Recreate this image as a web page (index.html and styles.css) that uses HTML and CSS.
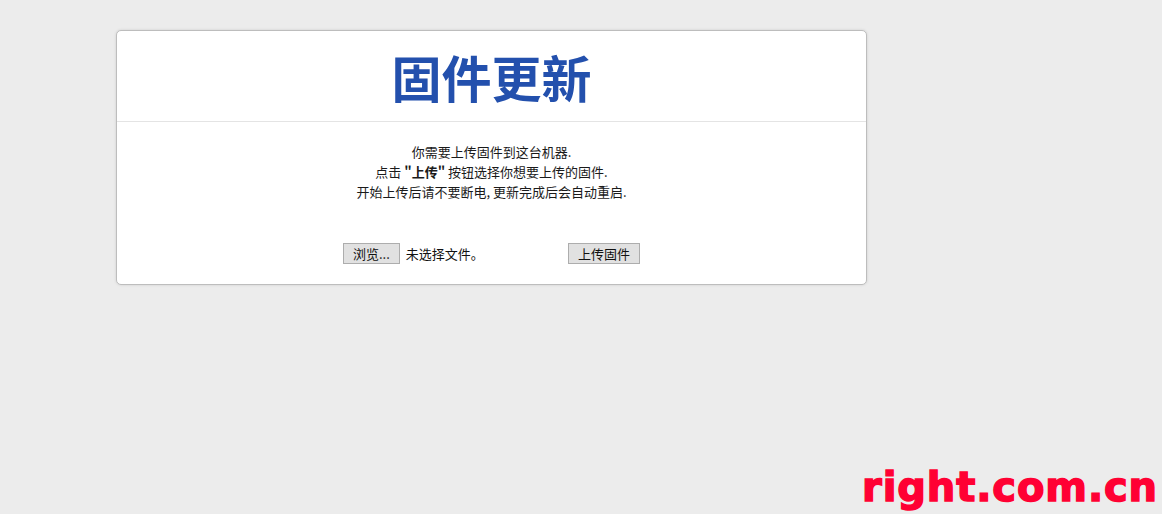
FILE: index.html
```html
<!DOCTYPE html>
<html lang="zh-CN">
<head>
    <meta charset="UTF-8">
    <title>固件更新</title>
    <link rel="stylesheet" href="styles.css">
</head>
<body>
    <div class="panel">
        <div class="panel-head">
            <h1>固件更新</h1>
        </div>
        <div class="panel-body">
            <p class="notes">
                你需要上传固件到这台机器.<br>
                点击 <b>"上传"</b> 按钮选择你想要上传的固件.<br>
                开始上传后请不要断电, 更新完成后会自动重启.
            </p>
            <form class="upload-row">
                <span class="file-box">
                    <span class="btn">浏览...</span>
                    <span class="file-name">未选择文件。</span>
                </span>
                <span class="btn">上传固件</span>
            </form>
        </div>
    </div>
    <div class="watermark">right.com.cn</div>
</body>
</html>
```

FILE: styles.css
```css
body {
    margin: 0;
    background-color: #ececec;
    font-family: "Noto Sans CJK SC", "Liberation Sans", sans-serif;
    color: #222;
    height: 514px;
    overflow: hidden;
}
.panel {
    width: 749px;
    margin: 30px 0 0 116px;
    background-color: #fff;
    border: 1px solid #bdbdbd;
    border-radius: 5px;
    box-shadow: 0 0 3px rgba(0, 0, 0, 0.12);
}
.panel-head {
    height: 90px;
    border-bottom: 1px solid #e4e4e4;
    display: flex;
    align-items: center;
    justify-content: center;
}
.panel-head h1 {
    margin: 0;
    font-size: 50px;
    font-weight: 700;
    line-height: 1;
    color: #2350ad;
}
.panel-body {
    padding: 20px 0 20px;
}
.notes {
    margin: 0;
    text-align: center;
    font-size: 13px;
    line-height: 20px;
    color: #1a1a1a;
}
.notes b {
    font-weight: 700;
}
.upload-row {
    margin: 41px 0 0;
    display: flex;
    justify-content: center;
    align-items: center;
    gap: 4px;
    font-size: 13px;
}
.file-box {
    width: 221px;
    display: flex;
    align-items: center;
    gap: 6px;
}
.btn {
    display: inline-block;
    box-sizing: border-box;
    height: 21px;
    line-height: 19px;
    padding: 0 9px;
    background-color: #e1e1e1;
    border: 1px solid #adadad;
    color: #111;
    font-size: 13px;
}
.file-name {
    color: #111;
}
.watermark {
    position: absolute;
    right: 4px;
    bottom: 7px;
    font-family: "DejaVu Sans", sans-serif;
    font-weight: 700;
    font-size: 40px;
    line-height: 40px;
    color: #ff0033;
    -webkit-text-stroke: 1.5px #ff0033;
    letter-spacing: 0.9px;
}
```
